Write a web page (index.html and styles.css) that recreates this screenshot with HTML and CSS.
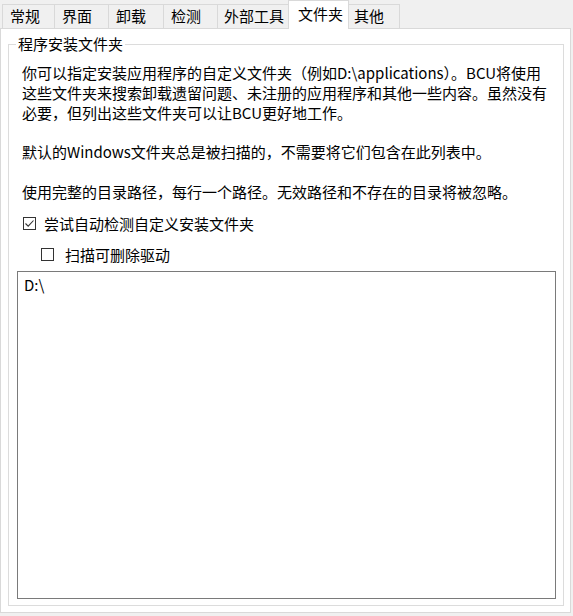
FILE: index.html
```html
<!DOCTYPE html>
<html lang="zh-CN">
<head>
    <meta charset="UTF-8">
    <title>文件夹</title>
    <link rel="stylesheet" href="styles.css">
</head>
<body>
    <div class="tabs">
        <span class="tab">常规</span>
        <span class="tab">界面</span>
        <span class="tab">卸载</span>
        <span class="tab">检测</span>
        <span class="tab">外部工具</span>
        <span class="tab active">文件夹</span>
        <span class="tab">其他</span>
    </div>

    <div class="panel">
        <fieldset class="group">
            <legend>程序安装文件夹</legend>
            <div class="group-body">
                <p class="desc">你可以指定安装应用程序的自定义文件夹（例如D:\applications）。BCU将使用<br>这些文件夹来搜索卸载遗留问题、未注册的应用程序和其他一些内容。虽然没有<br>必要，但列出这些文件夹可以让BCU更好地工作。<br><br>默认的Windows文件夹总是被扫描的，不需要将它们包含在此列表中。<br><br>使用完整的目录路径，每行一个路径。无效路径和不存在的目录将被忽略。</p>

                <label class="check">
                    <span class="box">
                        <svg width="11" height="11" viewBox="0 0 11 11"><path d="M1.5 5.5 L4.2 8.2 L9.5 2.5" fill="none" stroke="#333" stroke-width="1.1"/></svg>
                    </span>
                    尝试自动检测自定义安装文件夹
                </label>
                <label class="check sub">
                    <span class="box"></span>
                    扫描可删除驱动
                </label>

                <div class="paths">D:\</div>
            </div>
        </fieldset>
    </div>
</body>
</html>
```

FILE: styles.css
```css
body {
    margin: 0;
    background-color: #f0f0f0;
    font-family: "Noto Sans CJK SC", "Microsoft YaHei", sans-serif;
    font-size: 15px;
    color: #000;
}

.tabs {
    display: flex;
    align-items: flex-end;
    height: 28px;
    padding-left: 2px;
}

.tab {
    box-sizing: border-box;
    height: 24px;
    line-height: 22px;
    padding-left: 7px;
    border: 1px solid #d9d9d9;
    border-bottom: none;
    margin-right: -1px;
    background-color: #f0f0f0;
    white-space: nowrap;
}

.tab:nth-child(1) { width: 53px; }
.tab:nth-child(2) { width: 55px; }
.tab:nth-child(3) { width: 56px; }
.tab:nth-child(4) { width: 55px; }
.tab:nth-child(5) { width: 72px; padding-left: 6px; }
.tab:nth-child(7) { width: 52px; padding-left: 5px; }

.tab.active {
    width: 61px;
    height: 29px;
    line-height: 26px;
    padding-left: 9px;
    background-color: #fff;
    margin-bottom: -1px;
    position: relative;
    z-index: 1;
}

.panel {
    box-sizing: border-box;
    width: 571px;
    margin-left: 0;
    background-color: #fff;
    border: 1px solid #d9d9d9;
    padding: 5px 6px 6px 7px;
}

.group {
    margin: 0;
    padding: 0;
    border: 1px solid #dcdcdc;
}

.group legend {
    margin-left: 7px;
    padding: 0 2px;
    line-height: 20px;
}

.group-body {
    padding: 9px 7px 6px 8px;
}

.desc {
    margin: 0 0 12px 5px;
    line-height: 19.8px;
    white-space: nowrap;
}

.check {
    display: flex;
    align-items: center;
    height: 20px;
    padding-left: 6px;
    margin-bottom: 11px;
}

.check.sub {
    padding-left: 24px;
    margin-bottom: 6px;
}

.box {
    box-sizing: border-box;
    width: 13px;
    height: 13px;
    border: 1px solid #333;
    margin-right: 8px;
    display: flex;
    align-items: center;
    justify-content: center;
}

.check.sub .box {
    margin-right: 11px;
}

.paths {
    box-sizing: border-box;
    height: 328px;
    border: 1px solid #7a7a7a;
    padding: 3px 6px;
    line-height: 20px;
}
```
